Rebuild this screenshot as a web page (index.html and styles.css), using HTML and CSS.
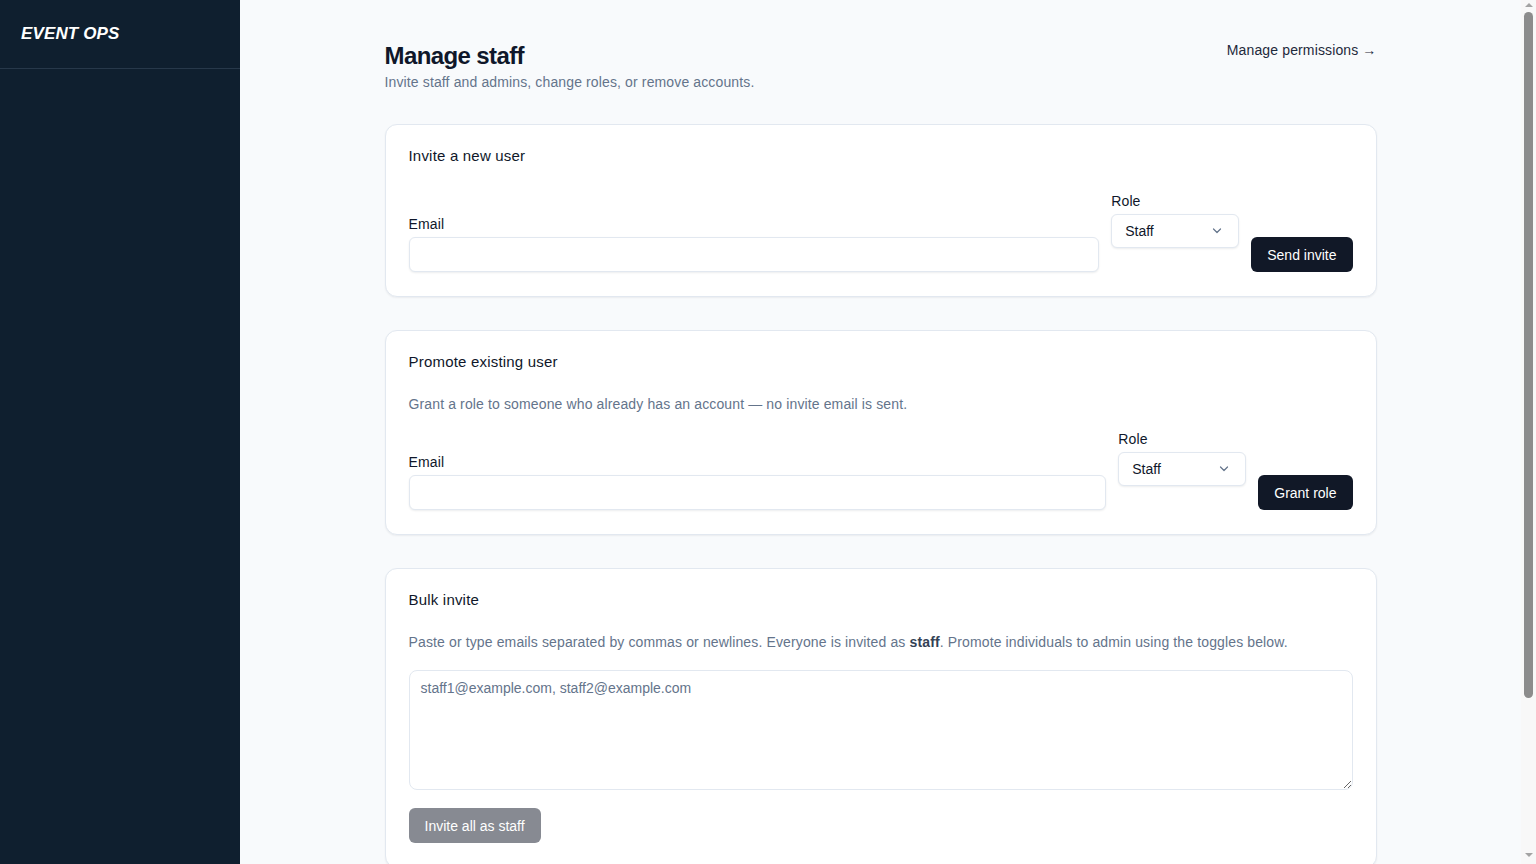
FILE: index.html
```html
<!DOCTYPE html>
<html lang="en">
<head>
    <meta charset="UTF-8">
    <meta name="viewport" content="width=device-width, initial-scale=1.0">
    <title>Manage staff</title>
    <link rel="stylesheet" href="styles.css">
</head>
<body>
    <aside class="sidebar">
        <div class="brand">EVENT OPS</div>
    </aside>

    <main class="main">
        <div class="wrap">
            <div class="page-head">
                <div>
                    <h1 class="title">Manage staff</h1>
                    <p class="subtitle">Invite staff and admins, change roles, or remove accounts.</p>
                </div>
                <a class="head-link" href="#">Manage permissions &rarr;</a>
            </div>

            <section class="card">
                <h2 class="card-title">Invite a new user</h2>
                <form class="row">
                    <div class="field grow">
                        <label for="invite-email">Email</label>
                        <input id="invite-email" class="input" type="email">
                    </div>
                    <div class="field role">
                        <label for="invite-role">Role</label>
                        <div class="select-wrap">
                            <select id="invite-role" class="select">
                                <option>Staff</option>
                                <option>Admin</option>
                            </select>
                            <svg class="chev" width="10" height="6" viewBox="0 0 10 6"><path d="M1.5 1l3.5 3.5 3.5-3.5" fill="none" stroke="#64748b" stroke-width="1.2" stroke-linecap="round" stroke-linejoin="round"/></svg>
                        </div>
                    </div>
                    <button type="button" class="btn">Send invite</button>
                </form>
            </section>

            <section class="card">
                <h2 class="card-title">Promote existing user</h2>
                <p class="card-desc">Grant a role to someone who already has an account &mdash; no invite email is sent.</p>
                <form class="row">
                    <div class="field grow">
                        <label for="promote-email">Email</label>
                        <input id="promote-email" class="input" type="email">
                    </div>
                    <div class="field role">
                        <label for="promote-role">Role</label>
                        <div class="select-wrap">
                            <select id="promote-role" class="select">
                                <option>Staff</option>
                                <option>Admin</option>
                            </select>
                            <svg class="chev" width="10" height="6" viewBox="0 0 10 6"><path d="M1.5 1l3.5 3.5 3.5-3.5" fill="none" stroke="#64748b" stroke-width="1.2" stroke-linecap="round" stroke-linejoin="round"/></svg>
                        </div>
                    </div>
                    <button type="button" class="btn">Grant role</button>
                </form>
            </section>

            <section class="card">
                <h2 class="card-title">Bulk invite</h2>
                <p class="card-desc">Paste or type emails separated by commas or newlines. Everyone is invited as <b>staff</b>. Promote individuals to admin using the toggles below.</p>
                <textarea class="textarea" placeholder="staff1@example.com, staff2@example.com"></textarea>
                <button type="button" class="btn" disabled>Invite all as staff</button>
            </section>

            <section class="card">
                <h2 class="card-title">Current staff</h2>
                <p class="card-desc">No staff accounts yet.</p>
            </section>
        </div>
    </main>

    <!-- page scroll rail -->
    <div class="rail">
        <span class="rail-arrow up"></span>
        <div class="rail-thumb"></div>
        <span class="rail-arrow down"></span>
    </div>
</body>
</html>
```

FILE: styles.css
```css
* {
    box-sizing: border-box;
}
body {
    margin: 0;
    height: 100vh;
    overflow: hidden;
    display: flex;
    background-color: #f8fafc;
    color: #0f172a;
    font-family: "Liberation Sans", Arial, sans-serif;
    font-size: 14px;
    letter-spacing: 0.13px;
}

/* sidebar */
.sidebar {
    width: 240px;
    flex-shrink: 0;
    height: 100vh;
    background-color: #0f1f2f;
}
.brand {
    padding: 22px 21px 22px;
    line-height: 24px;
    font-size: 17px;
    font-weight: 600;
    font-style: italic;
    color: #ffffff;
    border-bottom: 1px solid #27384a;
}

/* main */
.main {
    flex: 1;
    height: 100vh;
    overflow-y: auto;
    scrollbar-width: none;
    padding: 40px 24px 40px;
}
.wrap {
    max-width: 992px;
    margin: 0 auto;
}
.page-head {
    display: flex;
    justify-content: space-between;
    align-items: flex-start;
    margin-bottom: 32px;
}
.title {
    margin: 0;
    font-size: 24px;
    line-height: 32px;
    font-weight: 600;
    letter-spacing: -0.6px;
}
.subtitle {
    margin: 0;
    line-height: 20px;
    color: #64748b;
}
.head-link {
    line-height: 20px;
    color: #1e293b;
    text-decoration: none;
}

/* scroll rail */
.rail {
    width: 15px;
    flex-shrink: 0;
    height: 100vh;
    background: #f8f8f8;
    display: flex;
    flex-direction: column;
    align-items: center;
}
.rail-thumb {
    width: 9px;
    height: 686px;
    margin-top: 5px;
    border-radius: 5px;
    background: #8c8c8c;
}
.rail-arrow {
    width: 0;
    height: 0;
    border-left: 4px solid transparent;
    border-right: 4px solid transparent;
}
.rail-arrow.up {
    margin-top: 3px;
    border-bottom: 4px solid #a3a3a3;
}
.rail-arrow.down {
    margin-top: auto;
    margin-bottom: 7px;
    border-top: 4px solid #a3a3a3;
}

/* cards */
.card {
    background: #ffffff;
    border: 1px solid #e2e8f0;
    border-radius: 12px;
    box-shadow: 0 1px 2px rgba(15, 23, 42, 0.06);
    padding: 23px 23px 24px;
    margin-bottom: 33px;
}
.card-title {
    margin: 0;
    font-size: 15px;
    line-height: 16px;
    font-weight: 500;
    letter-spacing: 0.2px;
}
.card-desc {
    margin: 24px 0 14px;
    line-height: 20px;
    color: #64748b;
}
.card-desc b {
    color: #334155;
}
.card-title + .row {
    margin-top: 26px;
}

/* form */
.row {
    display: flex;
    align-items: flex-end;
    gap: 12px;
}
.field label {
    display: block;
    line-height: 22px;
    margin-bottom: 2px;
}
.grow {
    flex: 1;
}
.role {
    width: 128px;
    padding-bottom: 24px;
}
.input {
    width: 100%;
    height: 35px;
    border: 1px solid #e2e8f0;
    border-radius: 6px;
    box-shadow: 0 1px 2px rgba(15, 23, 42, 0.08);
    font: inherit;
    padding: 0 12px;
}
.select-wrap {
    position: relative;
}
.select {
    appearance: none;
    width: 100%;
    height: 34px;
    border: 1px solid #e2e8f0;
    border-radius: 6px;
    box-shadow: 0 1px 2px rgba(15, 23, 42, 0.08);
    background: #ffffff;
    font: inherit;
    color: #0f172a;
    padding: 0 28px 0 13px;
}
.chev {
    position: absolute;
    right: 17px;
    top: 14px;
    pointer-events: none;
}
.btn {
    height: 35px;
    padding: 0 16px;
    border: none;
    border-radius: 6px;
    background-color: #111827;
    color: #ffffff;
    font: inherit;
    font-size: 14px;
    cursor: pointer;
}
.btn:disabled {
    opacity: 0.5;
    cursor: default;
}
.textarea {
    display: block;
    width: 100%;
    height: 120px;
    margin: 18px 0 18px;
    padding: 7px 11px;
    border: 1px solid #e2e8f0;
    border-radius: 8px;
    font: inherit;
    line-height: 20px;
    color: #0f172a;
}
.textarea::placeholder {
    color: #64748b;
}
```
